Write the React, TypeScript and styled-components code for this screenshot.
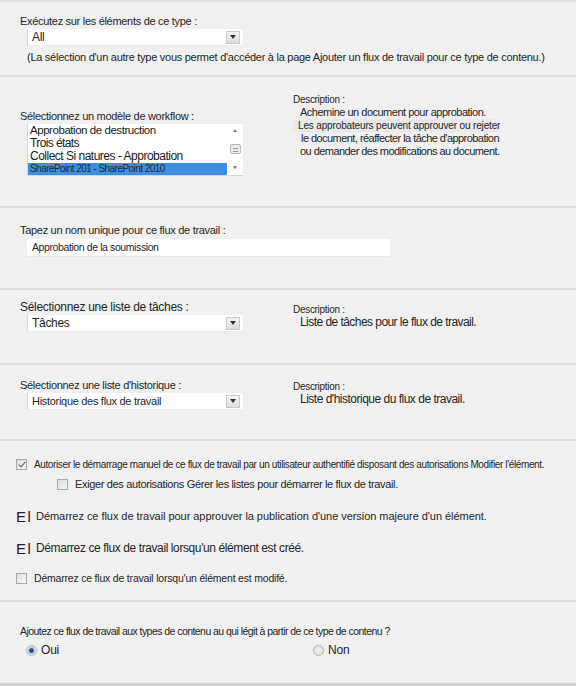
import React from 'react';
import styled, { createGlobalStyle } from 'styled-components';

const GlobalStyle = createGlobalStyle`
  html, body {
    margin: 0;
    padding: 0;
    background: #f0f0f0;
  }
  body {
    font-family: 'Liberation Sans', Arial, sans-serif;
    color: #262626;
    width: 576px;
    overflow: hidden;
  }
`;

const Page = styled.div`
  width: 576px;
  height: 686px;
  background: #f0f0f0;
  border-top: 2px solid #e2e2e2;
  box-sizing: border-box;
`;

const Section = styled.div<{ $h: number; $pt: number }>`
  height: ${(p) => p.$h}px;
  padding-top: ${(p) => p.$pt}px;
  box-sizing: border-box;
  border-bottom: 2px solid #dcdcdc;
  display: flex;
  align-items: flex-start;
`;

const LastSection = styled(Section)`
  border-bottom: 3px solid #d4d4d4;
`;

const LeftCol = styled.div<{ $w?: number }>`
  width: ${(p) => p.$w ?? 273}px;
  padding-left: 20px;
  box-sizing: border-box;
  display: flex;
  flex-direction: column;
`;

const RightCol = styled.div<{ $pt?: number }>`
  padding-left: 20px;
  padding-top: ${(p) => p.$pt ?? 0}px;
  display: flex;
  flex-direction: column;
`;

const Label = styled.div<{ $size?: number; $ls?: number }>`
  font-size: ${(p) => p.$size ?? 11}px;
  line-height: 14px;
  letter-spacing: ${(p) => p.$ls ?? -0.3}px;
  white-space: nowrap;
`;

const Note = styled(Label)`
  margin: 4px 0 0 7px;
  letter-spacing: -0.27px;
`;

const DescTitle = styled.div`
  font-size: 10px;
  line-height: 13px;
  letter-spacing: -0.3px;
`;

const DescLine = styled.div<{ $dx?: number; $size?: number; $ls?: number; $shade?: boolean }>`
  font-size: ${(p) => p.$size ?? 11}px;
  line-height: 13px;
  letter-spacing: ${(p) => p.$ls ?? -0.5}px;
  padding-left: ${(p) => p.$dx ?? 7}px;
  white-space: nowrap;
  background: ${(p) => (p.$shade ? '#e9e9e9' : 'transparent')};
  align-self: flex-start;
`;

const SelectBox = styled.div<{ $size?: number }>`
  margin: 1px 0 0 7px;
  width: 216px;
  height: 17px;
  background: #fff;
  border-left: 1px solid #d6d6d6;
  border-bottom: 1px solid #ececec;
  box-sizing: border-box;
  display: flex;
  align-items: center;
  justify-content: space-between;
  padding: 0 3px 0 4px;
  font-size: ${(p) => p.$size ?? 12}px;
  letter-spacing: -0.3px;
`;

const ArrowButton = styled.div`
  width: 14px;
  height: 13px;
  background: linear-gradient(#f4f4f4, #dcdcdc);
  border: 1px solid #c9c9c9;
  box-sizing: border-box;
  display: flex;
  align-items: center;
  justify-content: center;

  &::after {
    content: '';
    border-left: 3.5px solid transparent;
    border-right: 3.5px solid transparent;
    border-top: 4px solid #333;
  }
`;

const ListBox = styled.div`
  margin: 1px 0 0 7px;
  width: 216px;
  height: 52px;
  background: #fff;
  border-left: 1px solid #d6d6d6;
  border-bottom: 1px solid #d6d6d6;
  box-sizing: border-box;
  display: flex;
`;

const ListItems = styled.div`
  flex: 1;
  display: flex;
  flex-direction: column;
`;

const ListItem = styled.div<{ $size: number; $ls: number; $selected?: boolean }>`
  font-size: ${(p) => p.$size}px;
  line-height: ${(p) => (p.$selected ? 12 : 13)}px;
  height: ${(p) => (p.$selected ? 12 : 13)}px;
  letter-spacing: ${(p) => p.$ls}px;
  padding-left: 2px;
  white-space: nowrap;
  color: ${(p) => (p.$selected ? '#1b2a44' : '#1a1a1a')};
  background: ${(p) => (p.$selected ? '#3d8ee0' : 'transparent')};
`;

const ScrollBar = styled.div`
  width: 16px;
  display: flex;
  flex-direction: column;
  align-items: center;
  justify-content: space-between;
  padding: 5px 0 6px;
  box-sizing: border-box;
`;

const ScrollArrow = styled.div<{ $up?: boolean }>`
  border-left: 2.5px solid transparent;
  border-right: 2.5px solid transparent;
  ${(p) => (p.$up ? 'border-bottom' : 'border-top')}: 3px solid #777;
`;

const ScrollThumb = styled.div`
  width: 11px;
  height: 10px;
  border: 1px solid #b9b9b9;
  border-radius: 2px;
  background: repeating-linear-gradient(#ececec 0 2px, #999 2px 3px);
  background-size: 5px 9px;
  background-position: center 1px;
  background-repeat: no-repeat;
  background-color: #ececec;
  box-sizing: border-box;
`;

const TextInput = styled.div`
  margin: 2px 0 0 7px;
  width: 363px;
  height: 18px;
  background: #fff;
  border-bottom: 1px solid #e6e6e6;
  box-sizing: border-box;
  padding: 2px 0 0 5px;
  font-size: 10.5px;
  letter-spacing: -0.4px;
`;

const OptionsBlock = styled.div`
  display: flex;
  flex-direction: column;
  padding-left: 16px;
`;

const OptionRow = styled.div<{ $indent?: number; $mt?: number }>`
  display: flex;
  align-items: center;
  gap: 7px;
  margin-left: ${(p) => p.$indent ?? 0}px;
  margin-top: ${(p) => p.$mt ?? 0}px;
  height: 14px;
`;

const Box = styled.div<{ $checked?: boolean }>`
  width: 11px;
  height: 11px;
  border: 1px solid #a9a9a9;
  background: linear-gradient(135deg, #dedede, #f7f7f7);
  box-sizing: border-box;
  position: relative;
  flex: none;

  ${(p) =>
    p.$checked &&
    `
    &::after {
      content: '';
      position: absolute;
      left: 3px;
      top: 0px;
      width: 3px;
      height: 6px;
      border-right: 1.5px solid #4a5a7a;
      border-bottom: 1.5px solid #4a5a7a;
      transform: rotate(40deg);
    }
  `}
`;

const GlyphMark = styled.span`
  font-size: 15px;
  color: #2a1620;
  width: 14px;
  letter-spacing: 1.5px;
  flex: none;
  margin-right: -1px;
`;

const OptionText = styled.span<{ $size?: number; $ls?: number }>`
  font-size: ${(p) => p.$size ?? 11}px;
  letter-spacing: ${(p) => p.$ls ?? -0.4}px;
  white-space: nowrap;
`;

const RadioRow = styled.div`
  display: flex;
  margin: 5px 0 0 6px;
`;

const RadioOption = styled.div<{ $w?: number }>`
  width: ${(p) => p.$w ?? 'auto'}px;
  display: flex;
  align-items: center;
  gap: 4px;
  font-size: 12px;
  letter-spacing: -0.2px;
`;

const RadioDot = styled.div<{ $checked?: boolean }>`
  width: 11px;
  height: 11px;
  border-radius: 50%;
  border: 1px solid #b4b4b4;
  box-sizing: border-box;
  background: ${(p) =>
    p.$checked
      ? 'radial-gradient(circle, #2a4f80 0 1.8px, #8fb3dc 2.6px, #dfe6ef 4px)'
      : 'radial-gradient(circle, #f2f2f2, #d9d9d9)'};
`;

const Dropdown = ({ value, size }: { value: string; size?: number }) => (
  <SelectBox $size={size}>
    <span>{value}</span>
    <ArrowButton />
  </SelectBox>
);

const templates = [
  { name: 'Approbation de destruction', size: 11.5, ls: -0.45 },
  { name: 'Trois états', size: 12, ls: -0.6 },
  { name: 'Collect Si natures - Approbation', size: 12, ls: -0.5 },
  { name: 'SharePoint 201 - SharePoint 2010', size: 10, ls: -0.55, selected: true },
];

const App = () => {
  return (
    <Page>
      <GlobalStyle />

      <Section $h={75} $pt={12}>
        <LeftCol $w={576}>
          <Label>Exécutez sur les éléments de ce type :</Label>
          <Dropdown value="All" />
          <Note>
            (La sélection d'un autre type vous permet d'accéder à la page Ajouter un flux de travail pour ce type de contenu.)
          </Note>
        </LeftCol>
      </Section>

      <Section $h={131} $pt={16}>
        <LeftCol>
          <Label style={{ marginTop: 16 }}>Sélectionnez un modèle de workflow :</Label>
          <ListBox>
            <ListItems>
              {templates.map((t) => (
                <ListItem key={t.name} $size={t.size} $ls={t.ls} $selected={t.selected}>
                  {t.name}
                </ListItem>
              ))}
            </ListItems>
            <ScrollBar>
              <ScrollArrow $up />
              <ScrollThumb />
              <ScrollArrow />
            </ScrollBar>
          </ListBox>
        </LeftCol>
        <RightCol>
          <DescTitle>Description :</DescTitle>
          <DescLine $dx={7}>Achemine un document pour approbation.</DescLine>
          <DescLine $dx={5} $size={10} $ls={-0.15} $shade>
            Les approbateurs peuvent approuver ou rejeter
          </DescLine>
          <DescLine $dx={8} $ls={-0.55}>le document, réaffecter la tâche d'approbation</DescLine>
          <DescLine $dx={7} $ls={-0.55}>ou demander des modifications au document.</DescLine>
        </RightCol>
      </Section>

      <Section $h={82} $pt={15}>
        <LeftCol $w={576}>
          <Label>Tapez un nom unique pour ce flux de travail :</Label>
          <TextInput>Approbation de la soumission</TextInput>
        </LeftCol>
      </Section>

      <Section $h={75} $pt={10}>
        <LeftCol>
          <Label $size={12}>Sélectionnez une liste de tâches :</Label>
          <Dropdown value="Tâches" />
        </LeftCol>
        <RightCol $pt={3}>
          <DescTitle>Description :</DescTitle>
          <DescLine $dx={7} $size={12} $ls={-0.55}>Liste de tâches pour le flux de travail.</DescLine>
        </RightCol>
      </Section>

      <Section $h={76} $pt={13}>
        <LeftCol>
          <Label>Sélectionnez une liste d'historique :</Label>
          <Dropdown value="Historique des flux de travail" size={11} />
        </LeftCol>
        <RightCol $pt={2}>
          <DescTitle>Description :</DescTitle>
          <DescLine $dx={7} $size={12}>Liste d'historique du flux de travail.</DescLine>
        </RightCol>
      </Section>

      <Section $h={161} $pt={16}>
        <OptionsBlock>
          <OptionRow>
            <Box $checked />
            <OptionText $size={10} $ls={-0.38}>
              Autoriser le démarrage manuel de ce flux de travail par un utilisateur authentifié disposant des autorisations Modifier l'élément.
            </OptionText>
          </OptionRow>
          <OptionRow $indent={41} $mt={6}>
            <Box />
            <OptionText $size={11} $ls={-0.35}>
              Exiger des autorisations Gérer les listes pour démarrer le flux de travail.
            </OptionText>
          </OptionRow>
          <OptionRow $mt={18}>
            <GlyphMark>El</GlyphMark>
            <OptionText $size={11} $ls={-0.05}>
              Démarrez ce flux de travail pour approuver la publication d'une version majeure d'un élément.
            </OptionText>
          </OptionRow>
          <OptionRow $mt={18}>
            <GlyphMark>El</GlyphMark>
            <OptionText $size={12} $ls={-0.4}>
              Démarrez ce flux de travail lorsqu'un élément est créé.
            </OptionText>
          </OptionRow>
          <OptionRow $mt={16}>
            <Box />
            <OptionText $size={10.5} $ls={-0.2}>
              Démarrez ce flux de travail lorsqu'un élément est modifé.
            </OptionText>
          </OptionRow>
        </OptionsBlock>
      </Section>

      <LastSection $h={84} $pt={22}>
        <LeftCol $w={576}>
          <Label $size={10.5} $ls={-0.55}>
            Ajoutez ce flux de travail aux types de contenu au qui légit à partir de ce type de contenu ?
          </Label>
          <RadioRow>
            <RadioOption $w={287}>
              <RadioDot $checked />
              Oui
            </RadioOption>
            <RadioOption>
              <RadioDot />
              Non
            </RadioOption>
          </RadioRow>
        </LeftCol>
      </LastSection>
    </Page>
  );
};

export default App;
